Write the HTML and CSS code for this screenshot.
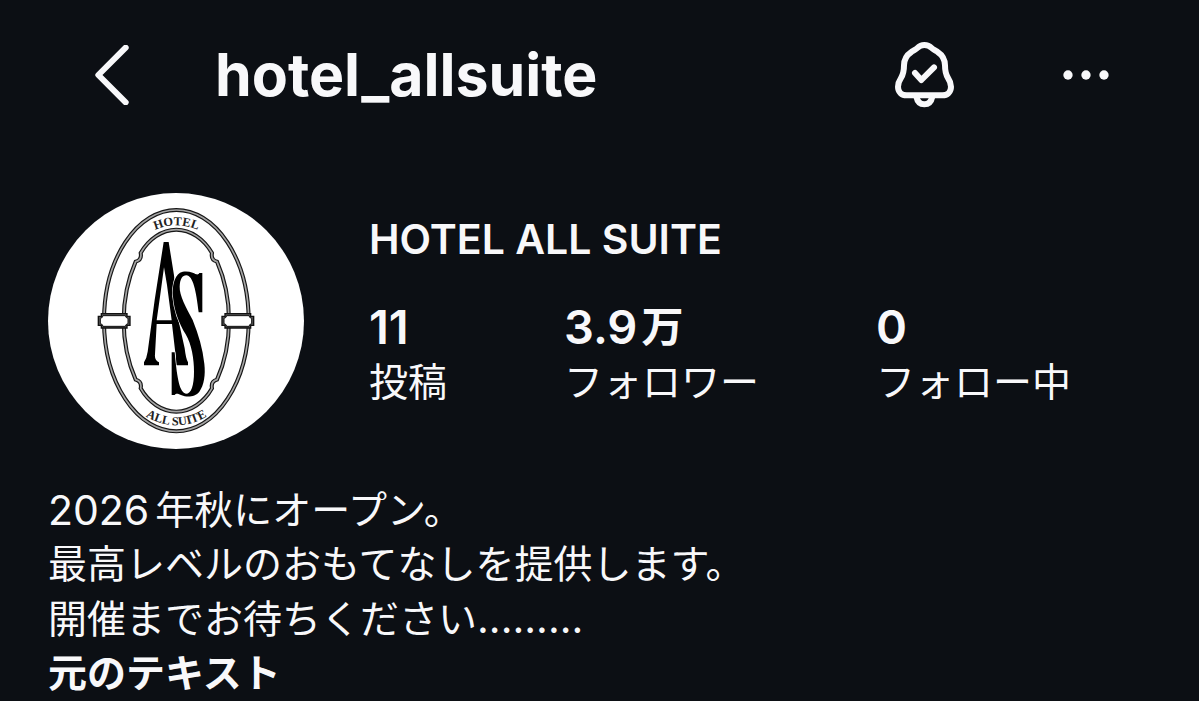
FILE: index.html
```html
<!DOCTYPE html>
<html lang="ja">
<head>
<meta charset="utf-8">
<meta name="viewport" content="width=device-width, initial-scale=1">
<title>hotel_allsuite</title>
<link rel="stylesheet" href="styles.css">
</head>
<body>
<header class="topbar">
  <button class="icon-button" type="button" aria-label="戻る">
    <svg class="icon-back" viewBox="44 44 100 180" aria-hidden="true"><path d="M135 52 53 134l82 82"/></svg>
  </button>
  <h1 class="username">hotel_allsuite</h1>
  <div class="actions">
    <button class="icon-button" type="button" aria-label="お知らせ">
      <svg class="icon-bell" viewBox="45 33 177 201" aria-hidden="true">
        <path d="M133 45c-9 0-15 3-21 9-5 5-10 6-17 11-15 10-23 23-23 41 0 16-2 27-9 38-6 9-9 16-9 26 0 16 11 26 26 26h107c15 0 26-10 26-26 0-10-3-17-9-26-7-11-9-22-9-38 0-18-8-31-23-41-7-5-12-6-17-11-6-6-13-9-22-9z"/>
        <path d="M109 200c3 15 12 23 24 23s21-8 24-23"/>
        <path d="m105 129 19 21 38-38"/>
      </svg>
    </button>
    <button class="icon-button" type="button" aria-label="その他">
      <svg class="icon-more" viewBox="549 110 136 48" aria-hidden="true"><circle cx="563" cy="134" r="14"/><circle cx="617" cy="134" r="14"/><circle cx="671" cy="134" r="14"/></svg>
    </button>
  </div>
</header>
<main>
  <section class="profile">
    <svg class="avatar" viewBox="24 24 768 768" role="img" aria-label="HOTEL ALL SUITE">
      <defs>
        <path id="arc-top" d="M300 160Q409 82 518 160"/>
        <path id="arc-bottom" d="M270 660Q409 782 548 660"/>
        <ellipse id="ring" cx="409" cy="407" rx="217" ry="332"/>
        <path id="frame" d="M302 204C326 162 366 134 409 134s83 28 107 70c-3 14 1 22 15 26 23 52 36 112 36 177s-13 125-36 177c-14 4-18 12-15 26-24 42-64 70-107 70s-83-28-107-70c3-14-1-22-15-26-23-52-36-112-36-177s13-125 36-177c14-4 18-12 15-26z"/>
      </defs>
      <circle class="disc" cx="408" cy="408" r="384"/>
      <use href="#ring" class="line"/><use href="#ring" class="inlay"/>
      <use href="#frame" class="line"/><use href="#frame" class="inlay"/>
      <g id="clasp">
        <path class="clasp-edge" d="M184 386h77v8h9v27h-9v8h-77v-8h-9v-27h9z"/>
        <path class="clasp-core" d="M189 392h67q1 7 8 8v16q-7 1-8 8h-67q-1-7-8-8v-16q7-1 8-8z"/>
      </g>
      <use href="#clasp" x="371"/>
      <text class="motto"><textPath href="#arc-top" startOffset="50%">HOTEL</textPath></text>
      <text class="motto"><textPath href="#arc-bottom" startOffset="50%">ALL SUITE</textPath></text>
      <path class="mark" fill-rule="evenodd" d="M371 171H386L402 271 414 400 434 490Q438 524 444 532V541H405V532Q409 526 407 512L396 417H350L345 508Q343 526 357 532V541H312V532Q320 520 323 500L344 345ZM372 247 360 335 350 406H395L381 300Z"/>
      <path class="mark mark-front" d="M487 264h-9c-4 8-10 3-20-1-13-5-28-5-38 0-18 12-24 42-21 72 3 40 18 80 38 113 18 30 25 75 25 112 0 42-8 66-24 66-18-4-26-36-34-124h-9v128h9c4-6 11-4 21 1 15 6 40 6 53-11 14-20 19-50 15-84-5-45-17-87-35-131-20-38-40-74-39-100 1-23 8-34 20-34 20 0 30 49 37 111h11z"/>
    </svg>
    <div class="details">
      <h2 class="name">HOTEL ALL SUITE</h2>
      <dl class="stats">
        <div class="stat"><dt>投稿</dt><dd>11</dd></div>
        <div class="stat"><dt>フォロワー</dt><dd class="with-unit">3.9<span class="unit">万</span></dd></div>
        <div class="stat"><dt>フォロー中</dt><dd>0</dd></div>
      </dl>
    </div>
  </section>
  <section class="bio">
    <p class="bio-opening"><span class="latin">2026</span><span>年秋にオープン。</span></p>
    <p>最高レベルのおもてなしを提供します。</p>
    <p>開催までお待ちください<span class="latin">.........</span></p>
    <button class="original" type="button">元のテキスト</button>
  </section>
</main>
</body>
</html>
```

FILE: styles.css
```css
* { box-sizing: border-box; }

body {
  margin: 0;
  background: #0c0f14;
  color: #f8f8fa;
  font-family: Inter, "Noto Sans CJK JP", sans-serif;
}

h1, h2, p, dl, dd { margin: 0; }

button {
  padding: 0;
  border: 0;
  background: none;
  color: inherit;
  font: inherit;
  cursor: pointer;
}

svg { display: block; }

.topbar {
  display: flex;
  align-items: center;
  padding: 41px 90px 41px 95px;
}

.icon-back, .icon-bell {
  fill: none;
  stroke: currentColor;
  stroke-linecap: round;
  stroke-linejoin: round;
  stroke-width: 18;
}

.icon-back { width: 34px; height: 60px; }
.icon-bell { width: 59px; height: 67px; }
.icon-more { width: 46px; height: 16px; fill: currentColor; }

.username {
  margin-left: 86px;
  font-size: 59px;
  font-weight: 700;
  line-height: 64px;
}

.actions {
  display: flex;
  align-items: center;
  gap: 109px;
  margin-left: auto;
}

.profile {
  display: flex;
  align-items: flex-start;
  gap: 65px;
  padding: 44px 48px 34px;
}

.avatar { flex: none; width: 256px; height: 256px; }
.disc { fill: #fff; }
.line { fill: none; stroke: #161616; stroke-width: 12; }
.inlay { fill: none; stroke: #a4a4a4; stroke-width: 5; }
.clasp-edge { fill: #555; stroke: #111; stroke-width: 4; }
.clasp-core { fill: #fff; stroke: #111; stroke-width: 3; }

.motto {
  fill: #222;
  font: 700 37px "Liberation Serif", serif;
  text-anchor: middle;
}

.mark { fill: #000; }
.mark-front { stroke: #fff; stroke-width: 4; paint-order: stroke; }

.details { flex: 1; padding-top: 22px; }

.name {
  font-size: 41px;
  font-weight: 600;
  line-height: 48px;
}

.stats {
  display: grid;
  grid-template-columns: 195px 312px auto;
  margin-top: 36px;
}

.stat { display: flex; flex-direction: column-reverse; }

.stat dt { font-size: 39px; line-height: 54px; }

.stat dd {
  font-size: 47px;
  font-weight: 600;
  line-height: 56px;
}

.with-unit { display: flex; gap: 4px; }
.unit { font-size: 42px; }

.bio {
  padding: 0 48px;
  font-size: 39px;
  line-height: 54px;
}

.bio-opening { display: flex; gap: 6px; }
.latin { font-size: 41px; }

.original { display: block; font-weight: 700; }
```
